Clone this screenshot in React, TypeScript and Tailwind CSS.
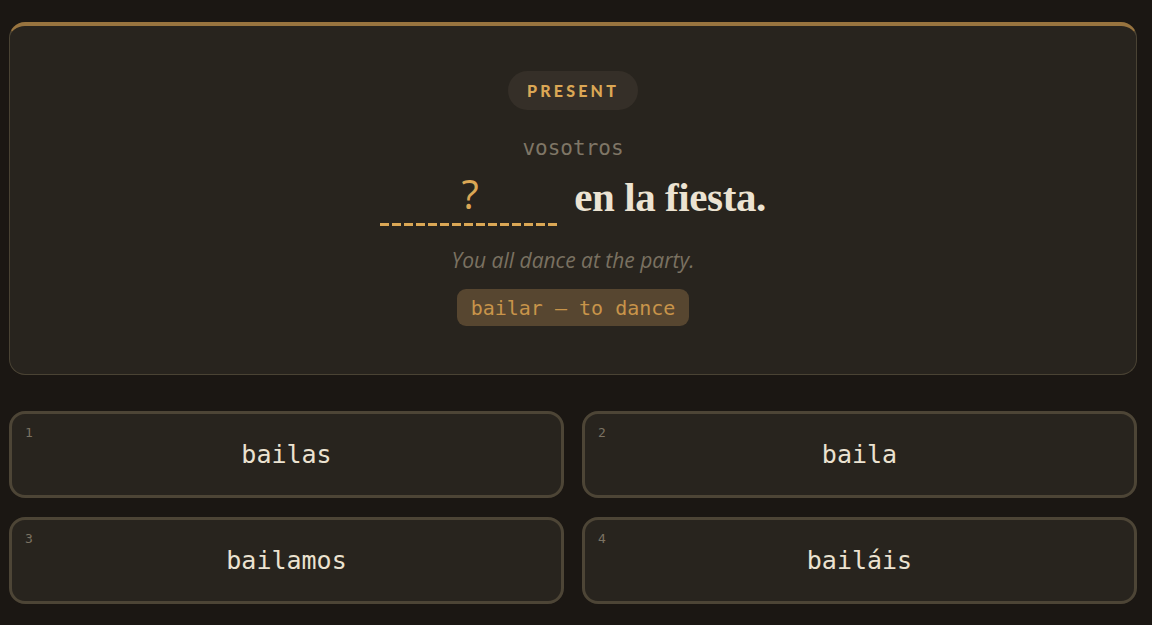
import React from "react";

function Option({ n, word }: { n: number; word: string }) {
  return (
    <div className="relative h-[87px] rounded-[16px] border-[3px] border-[#4d4536] bg-[#28241e] flex items-center justify-center">
      <span className="absolute top-[9px] left-[13px] text-[13px] text-[#7b7262] font-['DejaVu_Sans_Mono',monospace]">
        {n}
      </span>
      <span className="text-[25px] text-[#ebe2d0] font-['DejaVu_Sans_Mono',monospace]">{word}</span>
    </div>
  );
}

export default function App() {
  return (
    <div className="min-h-[625px] w-full bg-[#1b1713] pt-[22px] pl-[9px]">
      <div className="w-[1128px] h-[353px] rounded-[16px] border border-[#4a4334] border-t-4 border-t-[#98743f] bg-[#28241e] flex flex-col items-center pt-[45px]">
        <div className="h-[39px] px-[19px] rounded-full bg-[#352f28] text-[#dba755] font-black text-[16px] tracking-[0.2em] flex items-center font-['Lato','Open_Sans',sans-serif]">
          PRESENT
        </div>
        <div className="mt-[24px] h-[28px] leading-[28px] text-[21px] text-[#7f7666] font-['DejaVu_Sans_Mono',monospace]">
          vosotros
        </div>
        <div className="mt-[10px] flex items-end gap-[14px]">
          <div className="w-[180px] flex flex-col items-center">
            <div className="h-[51px] flex items-start justify-center">
              <span className="text-[40px] leading-[44px] font-medium text-[#dba755] font-['Open_Sans',sans-serif]">?</span>
            </div>
            <div className="w-full h-[3px] bg-[repeating-linear-gradient(90deg,#dba755_0px,#dba755_9px,transparent_9px,transparent_12px)]" />
          </div>
          <div className="text-[41px] leading-[50px] font-bold text-[#ece3d2] pb-[4px] tracking-[-0.01em] font-['Liberation_Serif',serif]">
            en la fiesta.
          </div>
        </div>
        <div className="mt-[20px] text-[21px] leading-[28px] italic text-[#7a7161] font-['Open_Sans',sans-serif]">
          You all dance at the party.
        </div>
        <div className="mt-[15px] h-[37px] px-[14px] rounded-[9px] bg-[#574630] text-[#c8944a] text-[20px] flex items-center font-['DejaVu_Sans_Mono',monospace]">
          bailar — to dance
        </div>
      </div>
      <div className="mt-[36px] w-[1128px] grid grid-cols-2 gap-x-[18px] gap-y-[19px]">
        <Option n={1} word="bailas" />
        <Option n={2} word="baila" />
        <Option n={3} word="bailamos" />
        <Option n={4} word="bailáis" />
      </div>
    </div>
  );
}
